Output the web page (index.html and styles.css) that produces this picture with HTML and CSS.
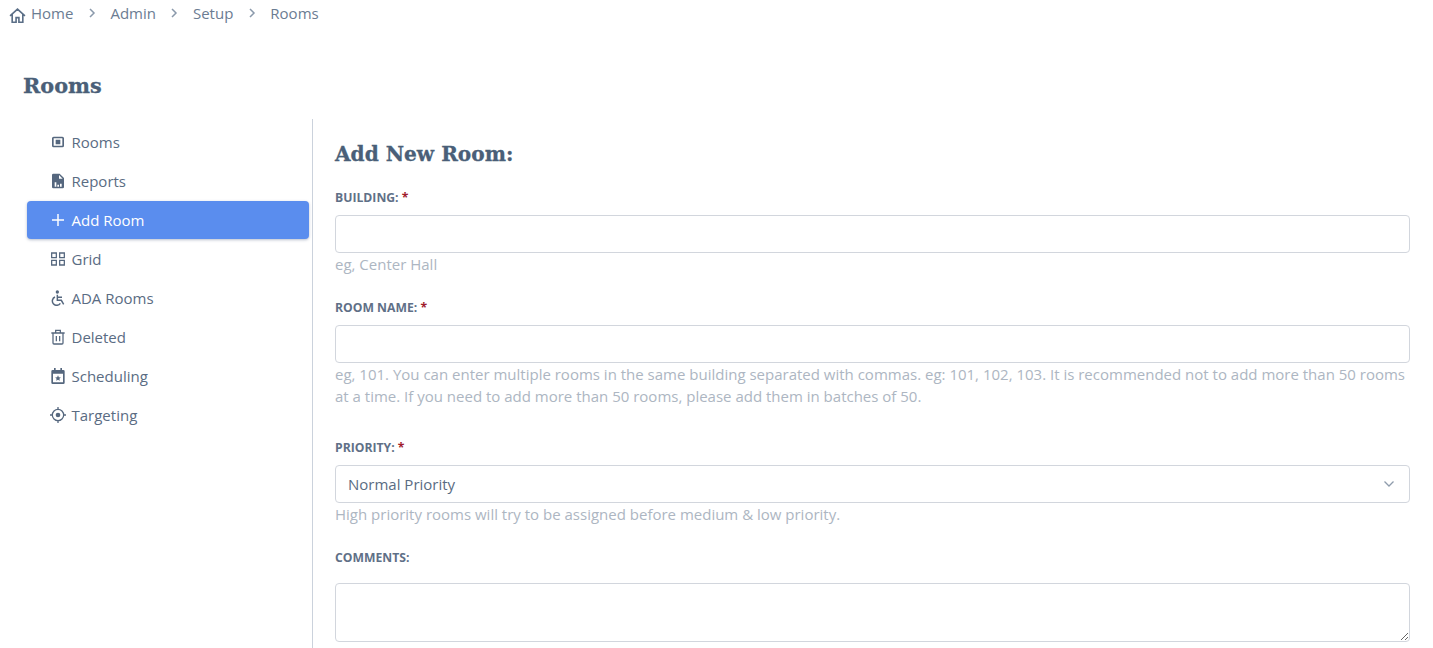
FILE: index.html
```html
<!DOCTYPE html>
<html lang="en">
<head>
    <meta charset="UTF-8">
    <title>Rooms</title>
    <link rel="stylesheet" href="styles.css">
</head>
<body>
    <nav class="breadcrumb">
        <svg class="home-icon" viewBox="0 0 24 24"><path d="M1.500 12.500L12 3l10.500 9.500M4.500 10v11.500H10v-6.500h4v6.500h5.500V10"/></svg>
        <a>Home</a>
        <svg class="crumb-sep" viewBox="0 0 12 12"><path d="M4 2l4 4-4 4"/></svg>
        <a>Admin</a>
        <svg class="crumb-sep" viewBox="0 0 12 12"><path d="M4 2l4 4-4 4"/></svg>
        <a>Setup</a>
        <svg class="crumb-sep" viewBox="0 0 12 12"><path d="M4 2l4 4-4 4"/></svg>
        <a>Rooms</a>
    </nav>

    <h1 class="page-title">Rooms</h1>

    <div class="layout">
        <ul class="side-menu">
            <li class="side-item">
                <svg class="side-icon" viewBox="0 0 24 24"><path class="fill" fill-rule="evenodd" d="M5.500 4h13A2.500 2.500 0 0 1 21 6.500v11a2.500 2.500 0 0 1-2.500 2.500h-13A2.500 2.500 0 0 1 3 17.500v-11A2.500 2.500 0 0 1 5.500 4zm0 2.500v11h13v-11zM8.500 8.500h7v7h-7z"/></svg>
                Rooms
            </li>
            <li class="side-item">
                <svg class="side-icon" viewBox="0 0 24 24"><path class="fill" fill-rule="evenodd" d="M5 1h9.500L21 7.500V21a2 2 0 0 1-2 2H5a2 2 0 0 1-2-2V3a2 2 0 0 1 2-2zm2 13v6.500h2.500V14zm4 3.500v3h2.500v-3zm4-1.500v4.500h2.500V16zM13.500 3v5.500H19z"/></svg>
                Reports
            </li>
            <li class="side-item active">
                <svg class="side-icon" viewBox="0 0 24 24"><path class="line" d="M12 3v18M3 12h18"/></svg>
                Add Room
            </li>
            <li class="side-item">
                <svg class="side-icon" viewBox="0 0 24 24"><path class="line thin" d="M2.500 3h7v7h-7zM14.500 3h7v7h-7zM2.500 14h7v7h-7zM14.500 14h7v7h-7z"/></svg>
                Grid
            </li>
            <li class="side-item">
                <svg class="side-icon" viewBox="0 0 24 24"><circle class="fill" cx="11" cy="3" r="2.500"/><path class="line" d="M11 7v8.500h6l3.500 6M11 11h7M7.500 10.500a6.500 6.500 0 1 0 8 9.500"/></svg>
                ADA Rooms
            </li>
            <li class="side-item">
                <svg class="side-icon" viewBox="0 0 24 24"><path class="line thin" d="M2 6h20M8.500 6V2h7v4M4.500 6v15a1.500 1.500 0 0 0 1.500 1.500h12a1.500 1.500 0 0 0 1.500-1.500V6M9.500 10.500v8M14.500 10.500v8"/></svg>
                Deleted
            </li>
            <li class="side-item">
                <svg class="side-icon" viewBox="0 0 24 24"><path class="fill" fill-rule="evenodd" d="M6 0h2.500v3h7V0H18v3h2a2 2 0 0 1 2 2v17a2 2 0 0 1-2 2H4a2 2 0 0 1-2-2V5a2 2 0 0 1 2-2h2zM4.500 8.500v13h15v-13zM12 11l1.300 2.700 3 .400-2.200 2 .6 2.900-2.700-1.400-2.700 1.400.6-2.900-2.200-2 3-.4z"/></svg>
                Scheduling
            </li>
            <li class="side-item">
                <svg class="side-icon" viewBox="0 0 24 24"><circle class="line thin" cx="12" cy="12" r="8.500"/><circle class="fill" cx="12" cy="12" r="3.500"/><path class="line thin" d="M12 0v3.500M12 20.500V24M0 12h3.500M20.500 12H24"/></svg>
                Targeting
            </li>
        </ul>

        <form class="room-form">
            <h2 class="form-title">Add New Room:</h2>

            <div class="field field-building">
                <label class="field-label">Building: <span class="required">*</span></label>
                <input class="text-input" type="text">
                <p class="field-hint">eg, Center Hall</p>
            </div>

            <div class="field field-name">
                <label class="field-label">Room Name: <span class="required">*</span></label>
                <input class="text-input" type="text">
                <p class="field-hint">eg, 101. You can enter multiple rooms in the same building separated with commas. eg: 101, 102, 103. It is recommended not to add more than 50 rooms at a time. If you need to add more than 50 rooms, please add them in batches of 50.</p>
            </div>

            <div class="field field-priority">
                <label class="field-label">Priority: <span class="required">*</span></label>
                <div class="select-box">
                    <select class="text-input select-input">
                        <option>Normal Priority</option>
                        <option>High Priority</option>
                        <option>Low Priority</option>
                    </select>
                    <svg class="select-arrow" viewBox="0 0 12 12"><path d="M1.500 3.500L6 8l4.500-4.500"/></svg>
                </div>
                <p class="field-hint">High priority rooms will try to be assigned before medium &amp; low priority.</p>
            </div>

            <div class="field">
                <label class="field-label">Comments:</label>
                <textarea class="text-input comments-input"></textarea>
            </div>
        </form>
    </div>
</body>
</html>
```

FILE: styles.css
```css
html, body {
    height: 648px;
    overflow: hidden;
}
body {
    margin: 0;
    font-family: "Open Sans", Arial, sans-serif;
    font-size: 15px;
    color: #4a5f78;
    background-color: #ffffff;
}
.breadcrumb {
    display: flex;
    align-items: center;
    height: 25px;
    padding: 0 0 2px 9px;
    color: #6b7c92;
}
.home-icon {
    width: 17px;
    height: 17px;
    margin: 5px 5px 0 0;
    fill: none;
    stroke: #5b6f87;
    stroke-width: 2.300;
}
.crumb-sep {
    width: 12px;
    height: 12px;
    margin: 0 12.500px;
    fill: none;
    stroke: #8a99ab;
    stroke-width: 1.500;
}
.page-title {
    margin: 0;
    padding: 44px 0 0 23px;
    height: 48px;
    font-family: "DejaVu Serif", "Liberation Serif", serif;
    font-size: 20.800px;
    line-height: 30px;
    font-weight: bold;
    color: #4a5f78;
    -webkit-text-stroke: 0.3px #4a5f78;
}
.layout {
    display: flex;
    height: 529px;
}
.side-menu {
    list-style: none;
    margin: 0;
    padding: 4px 3px 0 27px;
    width: 282px;
    border-right: 1px solid #cbd2dc;
}
.side-item {
    display: flex;
    align-items: center;
    height: 38px;
    margin-bottom: 1px;
    padding-left: 23px;
    border-radius: 4px;
    color: #5a6c83;
}
.side-item.active {
    background-color: #5a8dee;
    color: #ffffff;
    box-shadow: 0 1px 3px rgba(50, 70, 110, 0.35);
}
.side-icon {
    flex: none;
    width: 16px;
    height: 16px;
    margin-right: 5.500px;
}
.side-icon .fill {
    fill: #55677e;
}
.side-icon .line {
    fill: none;
    stroke: #55677e;
    stroke-width: 2.200;
}
.side-icon .thin {
    stroke-width: 1.900;
}
.active .side-icon .line {
    stroke: #ffffff;
}
.room-form {
    flex: 1;
    padding: 0 23px 0 22px;
}
.form-title {
    margin: 0;
    padding-top: 21px;
    height: 50px;
    font-family: "DejaVu Serif", "Liberation Serif", serif;
    font-size: 20.100px;
    line-height: 28px;
    font-weight: bold;
    color: #4a5f78;
    -webkit-text-stroke: 0.3px #4a5f78;
}
.field-label {
    display: block;
    height: 25px;
    font-size: 12.200px;
    line-height: 16px;
    font-weight: bold;
    text-transform: uppercase;
    color: #5f7087;
}
.required {
    color: #a01c2c;
}
.text-input {
    display: block;
    box-sizing: border-box;
    width: 100%;
    height: 38px;
    margin: 0;
    padding: 0 12px;
    border: 1px solid #d2d6dd;
    border-radius: 4px;
    background-color: #ffffff;
    font-family: inherit;
    font-size: 15px;
    color: #5a6c83;
}
.field-hint {
    margin: 0;
    font-size: 15px;
    line-height: 22px;
    color: #adb6c2;
}
.field-building {
    height: 110px;
}
.field-name {
    height: 140px;
}
.field-priority {
    height: 110px;
}
.select-box {
    position: relative;
}
.select-input {
    appearance: none;
}
.select-arrow {
    position: absolute;
    right: 15px;
    top: 13px;
    width: 12px;
    height: 12px;
    fill: none;
    stroke: #8f9cac;
    stroke-width: 1.300;
}
.comments-input {
    height: 59px;
    margin-top: 8px;
    padding: 8px 12px;
}
```
